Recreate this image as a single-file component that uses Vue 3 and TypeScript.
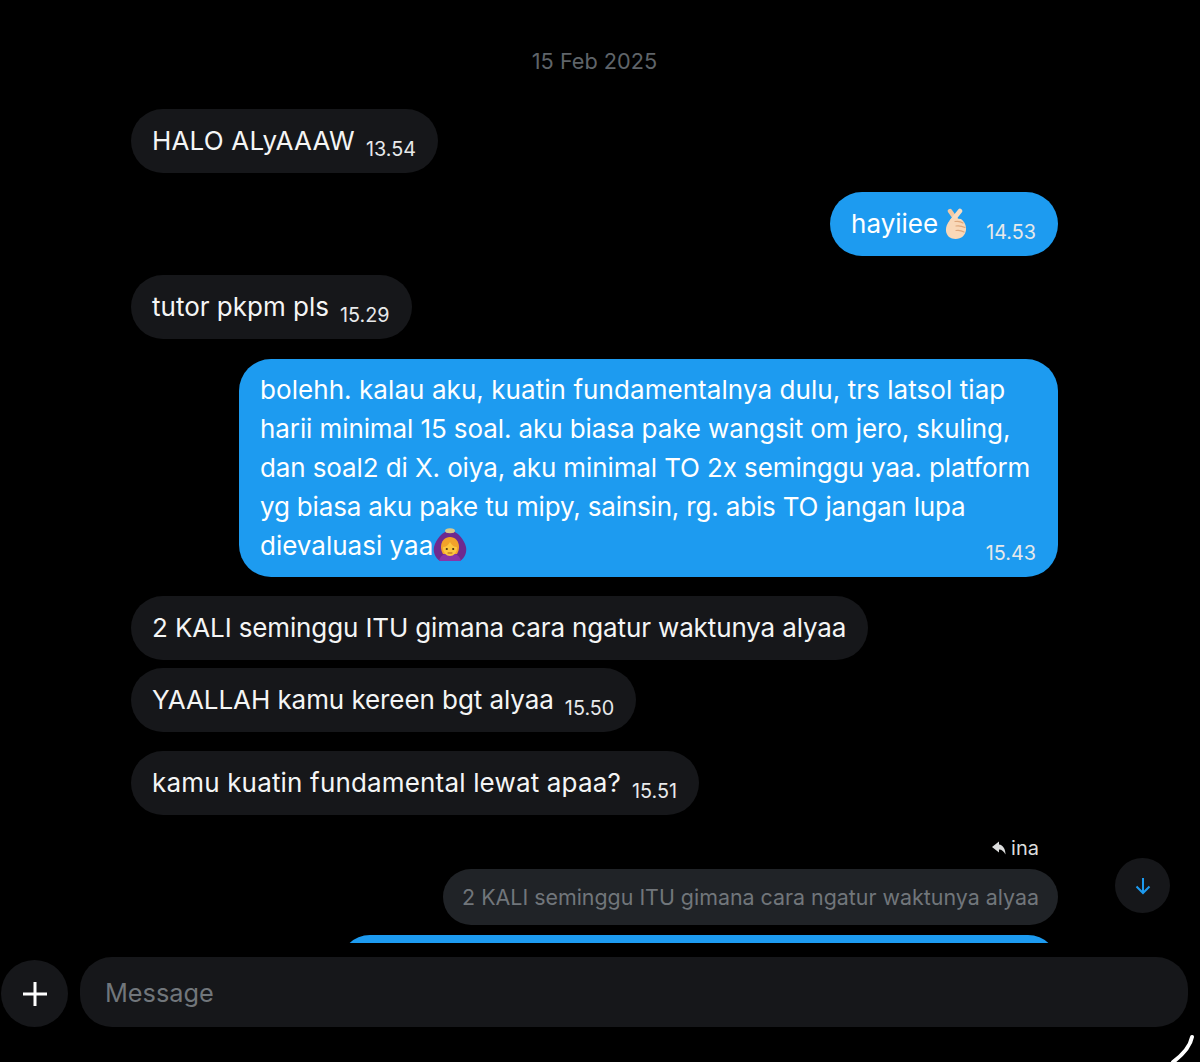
<template>
  <div class="screen">
    <div class="thread">
      <div class="date">15 Feb 2025</div>

      <div class="group left">
        <div class="bubble">
          <span class="fit-wide">HALO ALyAAAW</span><span class="time">13.54</span>
        </div>
      </div>

      <div class="group right">
        <div class="bubble blue">
          <span>hayiiee</span>
          <svg class="emoji" viewBox="0 0 22 31">
            <path d="M12 13 5 3" stroke="#f3c9a2" stroke-width="4.500" stroke-linecap="round" />
            <path d="M7 13 15 3" stroke="#f9dcc0" stroke-width="4.500" stroke-linecap="round" />
            <path
              d="M7 10C3 14 .5 18 1 23c.5 5 4.500 8 9.500 8 6 0 10-4 10.500-9 .3-4-1-8-5-11z"
              fill="#f9d8b8"
            />
            <path
              d="M10 13.500c3-.5 6 0 8 1.500M11 18c3-.5 6 0 9 1.500M11 22.500c3-.5 5.500 0 8 1.500"
              fill="none"
              stroke="#dfa87c"
              stroke-width="1.200"
              stroke-linecap="round"
            />
          </svg>
          <span class="time">14.53</span>
        </div>
      </div>

      <div class="group left">
        <div class="bubble">
          <span>tutor pkpm pls</span><span class="time">15.29</span>
        </div>
      </div>

      <div class="group right long-group">
        <div class="bubble blue long">
          <p v-for="line in longLines" :key="line.text" :style="{ letterSpacing: line.spacing + 'px' }">
            {{ line.text }}
          </p>
          <p>
            dievaluasi yaa<svg class="emoji person" viewBox="0 0 34 34">
              <path d="M14 3C9 5 3 11 1 19c-1 5 1 11 6 14h20c5-3 7-9 6-14-2-8-8-14-13-16z" fill="#6e2a8f" />
              <ellipse cx="17" cy="2.800" rx="5" ry="2.500" fill="#d8c88c" />
              <path d="M6 33c1-5 5-8 11-8s10 3 11 8z" fill="#8a35a8" />
              <path d="M8 19c0-6 4-10 9-10s9 4 9 10c0 3-1 5-2 7H10c-1-2-2-4-2-7z" fill="#f2a32a" />
              <ellipse cx="17" cy="20.500" rx="7" ry="7.500" fill="#fcc73e" />
              <path d="M10 19c3 0 5.500-2 7-5 1.500 3 4 5 7 5 0-6-3-9-7-9s-7 3-7 9z" fill="#f2a32a" />
              <circle cx="13.800" cy="21" r="1.100" fill="#4a3010" />
              <circle cx="20.200" cy="21" r="1.100" fill="#4a3010" />
              <path d="M15 25h4" stroke="#a85a1a" stroke-width="1" stroke-linecap="round" />
            </svg>
          </p>
          <span class="time corner">15.43</span>
        </div>
      </div>

      <div class="group left">
        <div class="bubble">
          <span class="fit-tight">2 KALI seminggu ITU gimana cara ngatur waktunya alyaa</span>
        </div>
        <div class="bubble">
          <span class="fit-slight">YAALLAH kamu kereen bgt alyaa</span><span class="time">15.50</span>
        </div>
      </div>

      <div class="group left">
        <div class="bubble">
          <span class="fit-wide">kamu kuatin fundamental lewat apaa?</span><span class="time">15.51</span>
        </div>
      </div>

      <div class="replied">
        <svg class="reply-icon" viewBox="0 0 14 14">
          <path d="M7 .5 0 6l7 5.500v-3c3 0 5 2 6.500 5 0-5.500-2.500-9.500-6.500-10z" fill="#dcdddd" />
        </svg>
        <span>ina</span>
      </div>
      <div class="quote">2 KALI seminggu ITU gimana cara ngatur waktunya alyaa</div>
      <div class="cut-bubble"></div>
    </div>

    <button class="scroll-down" type="button">
      <svg viewBox="0 0 24 24" width="24" height="24">
        <path d="M12 4v15M5.500 12.500 12 19l6.500-6.500" fill="none" stroke="#1d9bf0" stroke-width="2" />
      </svg>
    </button>

    <div class="composer">
      <button class="plus" type="button">
        <svg viewBox="0 0 28 28" width="28" height="28">
          <path d="M14 2v24M2 14h24" stroke="#fff" stroke-width="3" />
        </svg>
      </button>
      <div class="input">Message</div>
    </div>

    <svg class="corner-arc" viewBox="0 0 30 30" width="30" height="30">
      <path d="M22 5C20.500 13 15 21 3 30" fill="none" stroke="#fff" stroke-width="4" stroke-linecap="round" />
    </svg>
  </div>
</template>

<script setup lang="ts">
interface Line {
  text: string;
  spacing: number;
}

const longLines: Line[] = [
  { text: "bolehh. kalau aku, kuatin fundamentalnya dulu, trs latsol tiap", spacing: 0.065 },
  { text: "harii minimal 15 soal. aku biasa pake wangsit om jero, skuling,", spacing: -0.095 },
  { text: "dan soal2 di X. oiya, aku minimal TO 2x seminggu yaa. platform", spacing: -0.11 },
  { text: "yg biasa aku pake tu mipy, sainsin, rg. abis TO jangan lupa", spacing: -0.17 },
];
</script>

<style>
html,
body {
  background: #000;
}
</style>

<style scoped>
.screen {
  position: relative;
  width: 1200px;
  height: 1062px;
  overflow: hidden;
  background: #000;
  color: #fff;
  font-family: Inter, "Liberation Sans", sans-serif;
}
.thread {
  height: 943px;
  overflow: hidden;
  padding: 47px 142px 0 131px;
  box-sizing: border-box;
  display: flex;
  flex-direction: column;
}
.date {
  text-align: center;
  font-size: 21.700px;
  line-height: 28px;
  color: #5f6469;
  margin-bottom: 34px;
}
.group {
  display: flex;
  flex-direction: column;
  gap: 8px;
  margin-bottom: 19px;
}
.long-group {
  margin-top: 1px;
}
.left {
  align-items: flex-start;
}
.right {
  align-items: flex-end;
}
.bubble {
  display: flex;
  align-items: center;
  height: 64px;
  box-sizing: border-box;
  padding: 0 22px 2px 21px;
  border-radius: 32px;
  background: #16171a;
  font-size: 26px;
  color: #f4f5f5;
  white-space: nowrap;
}
.bubble.blue {
  background: #1d9bf0;
  color: #fff;
}
.fit-wide {
  letter-spacing: 0.17px;
}
.fit-tight {
  letter-spacing: -0.13px;
}
.fit-slight {
  letter-spacing: -0.07px;
}
.time {
  font-size: 19.800px;
  margin-left: 11px;
  position: relative;
  top: 9px;
  color: #e7e9ea;
}
.emoji {
  width: 22px;
  height: 31px;
  margin: 0 8px 0 7px;
}
.emoji.person {
  width: 34px;
  height: 34px;
  margin: 0;
  vertical-align: -7px;
}
.long {
  position: relative;
  display: block;
  height: 218px;
  width: 819px;
  padding: 11px 22px 12px 21px;
}
.long p {
  margin: 0;
  line-height: 39px;
}
.time.corner {
  position: absolute;
  right: 22px;
  bottom: 12px;
  top: auto;
}
.replied {
  align-self: flex-end;
  display: flex;
  align-items: center;
  gap: 5px;
  font-size: 20px;
  line-height: 24px;
  color: #dcdddd;
  margin: 2px 19px 9px 0;
}
.reply-icon {
  width: 14px;
  height: 14px;
}
.quote {
  flex: none;
  align-self: flex-end;
  height: 56px;
  line-height: 56px;
  padding: 0 19px;
  border-radius: 28px;
  background: #202327;
  color: #71767b;
  font-size: 21.400px;
  white-space: nowrap;
}
.cut-bubble {
  flex: none;
  align-self: flex-end;
  width: 718px;
  height: 60px;
  margin-top: 10px;
  border-radius: 32px;
  background: #1d9bf0;
}
.scroll-down {
  position: absolute;
  left: 1115px;
  top: 858px;
  width: 55px;
  height: 55px;
  padding: 0;
  border: 0;
  border-radius: 50%;
  background: #16171a;
  display: flex;
  align-items: center;
  justify-content: center;
}
.composer {
  display: flex;
  align-items: center;
  gap: 12px;
  margin-top: 14px;
  padding: 0 12px 0 1px;
}
.plus {
  flex: none;
  width: 67px;
  height: 67px;
  margin-top: 3px;
  padding: 0;
  border: 0;
  border-radius: 50%;
  background: #16171a;
  display: flex;
  align-items: center;
  justify-content: center;
}
.input {
  flex: 1;
  height: 70px;
  line-height: 72px;
  padding-left: 25px;
  border-radius: 32px;
  background: #16171a;
  color: #71767b;
  font-size: 25.300px;
}
.corner-arc {
  position: absolute;
  right: 0;
  bottom: 0;
}
</style>
